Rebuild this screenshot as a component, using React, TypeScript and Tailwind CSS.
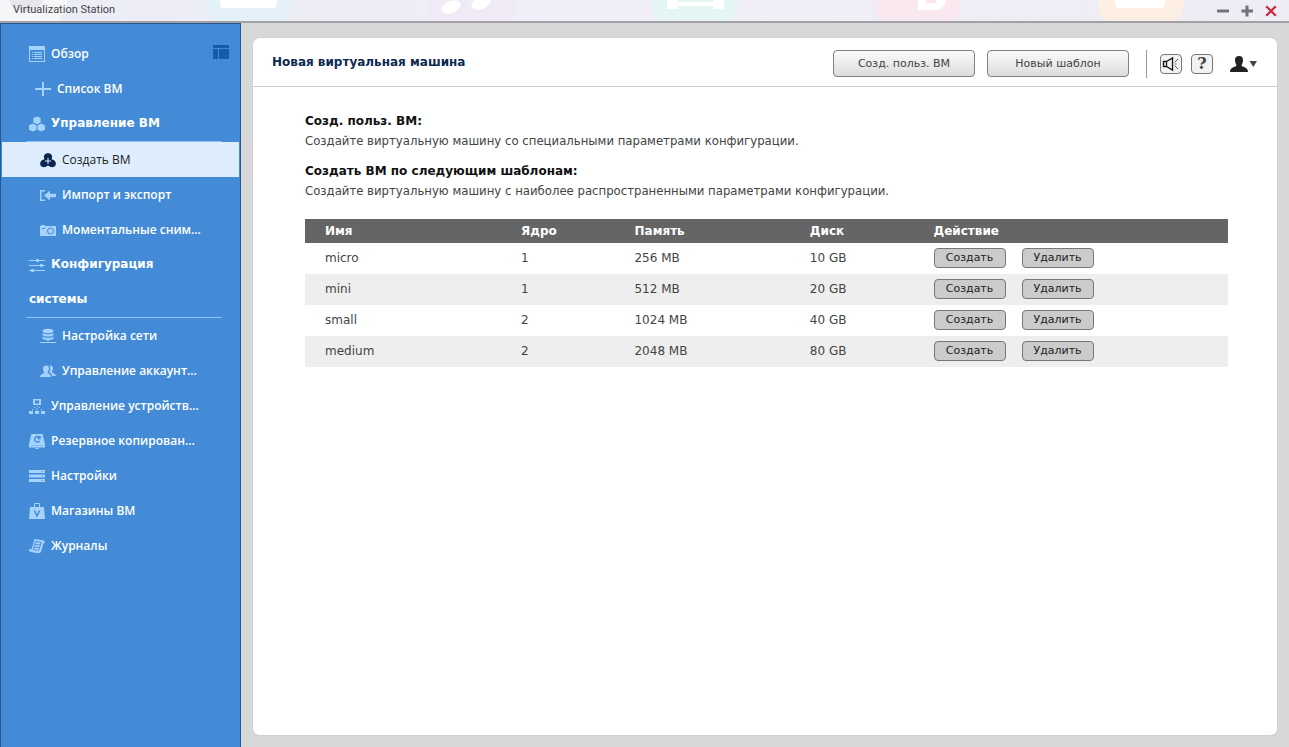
import type { ReactNode } from "react";

type IconProps = { children: ReactNode; className?: string };

function Glyph({ children, className = "" }: IconProps) {
  return (
    <svg viewBox="0 0 16 16" className={`h-4 w-4 shrink-0 ${className}`} fill="currentColor" aria-hidden="true">
      {children}
    </svg>
  );
}

const overviewIcon = (
  <Glyph>
    <path d="M0 0h16v16H0zM1 4v11h14V4z" fillRule="evenodd" />
    <path d="M3 6h1v1H3zM5 6h8v1H5zM3 8h1v1H3zM5 8h8v1H5zM3 10h1v1H3zM5 10h8v1H5zM3 12h1v1H3zM5 12h8v1H5z" />
  </Glyph>
);

const plusIcon = (
  <Glyph>
    <path d="M7 1h2v6h7v2H9v6H7V9H0V7h7z" />
  </Glyph>
);

const cubesIcon = (
  <Glyph>
    <path d="M8 0.500l3.600 1.600v4.500L8 8.200 4.400 6.600V2.100zM3.800 7.600l3.700 1.600v4.600l-3.700 1.700L0 13.800V9.200zM12.200 7.600L16 9.200v4.600l-3.800 1.700-3.700-1.700V9.200z" />
  </Glyph>
);

const createIcon = (
  <Glyph>
    <path d="M8 1l3 .9 1.200 2.400-.5 3L14.500 8.500 16 11l-.7 3-2.600 1.200-2.700-.5L8 13.500l-2 1.200-2.700.5L.7 14 0 11l1.500-2.500 2.800-1.200-.5-3L5 1.900z" />
    <path d="M7.500 6h1v2.500H11v1H8.500V12h-1V9.500H5v-1h2.500z" fill="#ddedfd" />
  </Glyph>
);

const importIcon = (
  <Glyph>
    <path d="M0 3h5v1.500H1.500v8H5V14H0zM4 8.500L10 3.500v3.200h6v3.600h-6v3.200z" />
  </Glyph>
);

const cameraIcon = (
  <Glyph>
    <path d="M0 4h1V3h4v1h11v10H0z" />
    <circle cx="10.500" cy="9" r="3" fill="none" stroke="#438bd7" />
    <path d="M2 6h3v1H2z" fill="#438bd7" />
  </Glyph>
);

const slidersIcon = (
  <Glyph>
    <path d="M0 3h16v1H0zM0 8h16v1H0zM0 13h16v1H0z" />
    <circle cx="8.500" cy="3.500" r="1.700" />
    <circle cx="12.500" cy="8.500" r="1.700" />
    <circle cx="3.500" cy="13.500" r="1.700" />
  </Glyph>
);

const networkIcon = (
  <Glyph>
    <ellipse cx="8" cy="3" rx="5.500" ry="2.300" />
    <path d="M2.500 5c1.500 1.700 9.500 1.700 11 0v2c-1.500 2-9.500 2-11 0zM2.500 8.500c1.500 1.700 9.500 1.700 11 0v2c-1.500 2-9.500 2-11 0zM7.500 12h1v1.500h-1zM0 14h16v1H0z" />
  </Glyph>
);

const usersIcon = (
  <Glyph>
    <path d="M6 2.500c2 0 3 1.200 3 3 0 1.500-.6 2.600-1.300 3.300v1.400c1.800.7 3.300 1.300 3.300 3.800H0c0-2.500 2-3 4-3.800V8.800C3.400 8 3 7 3 5.500c0-1.800 1-3 3-3z" />
    <path d="M9.500 2.500c2.300-.4 3.500.9 3.500 2.700 0 1.500-.5 2.300-1.100 3.100v1.200c2 .8 3.800 1.500 4.100 3.500h-3.800c-.5-2-1.700-2.800-3-3.400 1-1.600 1.500-4.600.3-7.100z" />
  </Glyph>
);

const devicesIcon = (
  <Glyph>
    <path d="M4 1h8v6H4zM6 2.500v3h4v-3z" fillRule="evenodd" />
    <path d="M0 13h4v3H0zM6 13h4v3H6zM12 13h4v3h-4zM7.500 8h1v1h-1zM7.500 10h1v1h-1zM5 9h1v1H5zM3 11h1v1H3zM10 9h1v1h-1zM12 11h1v1h-1zM7.500 12h1v1h-1z" />
  </Glyph>
);

const backupIcon = (
  <Glyph>
    <path d="M2.500 1h11L16 11v3.500H0V11z" />
    <path d="M10.300 4.200A2.800 2.800 0 1 0 10.600 8M11 3v2.500H8.500" fill="none" stroke="#438bd7" strokeWidth="1.400" />
    <path d="M2 12h12v1H2z" fill="#438bd7" opacity=".35" />
    <path d="M6.500 15h3v1h-3z" />
  </Glyph>
);

const settingsIcon = (
  <Glyph>
    <path d="M0 2h16v3H0zM0 6.500h16v3H0zM0 11h16v3H0z" />
    <path d="M13 3h1v1h-1zM13 7.500h1v1h-1zM13 12h1v1h-1z" fill="#438bd7" />
  </Glyph>
);

const storeIcon = (
  <Glyph>
    <path d="M1 4h14l1 12H0z" />
    <path d="M5.500 4V.5h5V4" fill="none" stroke="currentColor" />
    <path d="M5.500 7.500L8 13l2.500-5.500" fill="none" stroke="#438bd7" strokeWidth="1.500" />
  </Glyph>
);

const logsIcon = (
  <Glyph>
    <path d="M5.500 1l8.500 1.200c1.300.3 2 1.300 1.700 2.800l-1.200.2-2.300 7.800c-.4 1.500-1.500 2.300-3 2.200L2 14c-1.300-.3-2.200-1.500-2-3l2.500.3z" />
    <path d="M6.500 3.500l5.500.9M5.800 6.200l5.500.9M5 8.900l5.500.9M4.500 11.500l4 .8M6.800 3l-2.600 8.700M12.300 4l-2.700 8.500" fill="none" stroke="#438bd7" strokeWidth=".9" />
  </Glyph>
);

type Item = { label: string; icon: ReactNode; kind: "top" | "plus" | "sub" | "group"; active?: boolean };

const items: Item[] = [
  { label: "Обзор", icon: overviewIcon, kind: "top" },
  { label: "Список ВМ", icon: plusIcon, kind: "plus" },
  { label: "Управление ВМ", icon: cubesIcon, kind: "group" },
  { label: "Создать ВМ", icon: createIcon, kind: "sub", active: true },
  { label: "Импорт и экспорт", icon: importIcon, kind: "sub" },
  { label: "Моментальные сним...", icon: cameraIcon, kind: "sub" },
  { label: "Конфигурация системы", icon: slidersIcon, kind: "group" },
  { label: "Настройка сети", icon: networkIcon, kind: "sub" },
  { label: "Управление аккаунт...", icon: usersIcon, kind: "sub" },
  { label: "Управление устройств...", icon: devicesIcon, kind: "top" },
  { label: "Резервное копирован...", icon: backupIcon, kind: "top" },
  { label: "Настройки", icon: settingsIcon, kind: "top" },
  { label: "Магазины ВМ", icon: storeIcon, kind: "top" },
  { label: "Журналы", icon: logsIcon, kind: "top" },
];

const templates = [
  { name: "micro", cores: 1, memory: "256 MB", disk: "10 GB" },
  { name: "mini", cores: 1, memory: "512 MB", disk: "20 GB" },
  { name: "small", cores: 2, memory: "1024 MB", disk: "40 GB" },
  { name: "medium", cores: 2, memory: "2048 MB", disk: "80 GB" },
];

const indent = { top: "pl-7", plus: "pl-[34px]", sub: "pl-[39px]", group: "" };

function NavItem({ item }: { item: Item }) {
  if (item.kind === "group") {
    return (
      <li className="ml-[25px] mr-[18px] border-b border-[#8fc3f5] pl-[3px] pr-8">
        <a href="#" className="block font-['DejaVu_Sans',sans-serif] text-xs font-bold leading-[35px] text-white">
          <span className="mr-1.5 inline-block align-middle text-[#a5d2ff]">{item.icon}</span>
          {item.label}
        </a>
      </li>
    );
  }
  return (
    <li>
      <a
        href="#"
        aria-current={item.active ? "page" : undefined}
        className={`flex h-[35px] items-center gap-1.5 whitespace-nowrap ${
          item.active ? "mx-px bg-[#ddedfd] pl-[38px] text-[#222]" : `font-semibold text-white ${indent[item.kind]}`
        }`}
      >
        <span className={item.active ? "text-[#0a2550]" : "text-[#a5d2ff]"}>{item.icon}</span>
        {item.label}
      </a>
    </li>
  );
}

function Backdrop() {
  return (
    <svg className="absolute inset-0 h-full w-full" aria-hidden="true">
      <circle cx="30" cy="-5" r="38" fill="#f6f6f9" />
      <circle cx="26" cy="-6" r="18" fill="#e6e6ec" />
      <rect x="207" y="-60" width="83" height="83" rx="16" fill="#e4f1f9" />
      <rect x="220" y="-20" width="57" height="28" rx="4" fill="#fff" />
      <rect x="428" y="-60" width="88" height="83" rx="16" fill="#f0eaf6" />
      <ellipse cx="451" cy="7" rx="10" ry="6" fill="#fff" transform="rotate(-20 451 7)" />
      <ellipse cx="481" cy="3" rx="10" ry="6" fill="#fff" transform="rotate(-20 481 3)" />
      <rect x="652" y="-60" width="85" height="83" rx="16" fill="#e4f5f3" />
      <path d="M667 0h11v2h35V0h11v9h-11V6h-35v3h-11z" fill="#fff" />
      <rect x="875" y="-60" width="85" height="83" rx="16" fill="#fae8f1" />
      <path d="M918 0h8v3h10V0h10q-1 10-12 10h-16z" fill="#fff" />
      <rect x="1098" y="-60" width="85" height="83" rx="16" fill="#fdefe3" />
      <rect x="1115" y="-20" width="50" height="28" rx="4" fill="#fff" />
    </svg>
  );
}

const toolButton =
  "h-[27px] w-[142px] rounded border border-[#808080] bg-gradient-to-b from-[#fafafa] to-[#dcdcdc] pt-0.5";
const rowButton = "h-5 w-[72px] rounded border border-[#777] bg-[#cbcbcb]";

export default function App() {
  return (
    <div className="flex min-h-screen flex-col bg-[#d8d8d8] font-['DejaVu_Sans',sans-serif] text-xs text-[#444]">
      <header className="relative flex h-[23px] shrink-0 items-center justify-between overflow-hidden border-b-2 border-[#a0a0a6] bg-gradient-to-r from-[#ebedf5] via-[#f1eef8] to-[#eeedf5] pl-[13px] pr-3">
        <Backdrop />
        <h1 className="relative font-[Roboto,sans-serif] text-[11px] text-[#444]">Virtualization Station</h1>
        <div className="relative flex items-center gap-3">
          <button type="button" aria-label="Свернуть">
            <svg viewBox="0 0 12 12" className="h-3 w-3" fill="#73737b"><path d="M0 4.500h12v3H0z" /></svg>
          </button>
          <button type="button" aria-label="Развернуть">
            <svg viewBox="0 0 12 12" className="h-3 w-3" fill="#73737b"><path d="M4.500 0.500h3v4H12v3H7.500v4h-3v-4H.5v-3h4z" /></svg>
          </button>
          <button type="button" aria-label="Закрыть">
            <svg viewBox="0 0 12 12" className="h-3 w-3" stroke="#d0253c" strokeWidth="2.200"><path d="M1.200 1.200l9.600 9.600M10.800 1.200l-9.600 9.600" /></svg>
          </button>
        </div>
      </header>

      <div className="flex flex-1">
        <nav className="relative w-[241px] shrink-0 border-x border-t border-[#24588f] bg-[#438bd7] pt-3 font-['Open_Sans',sans-serif] text-xs">
          <button type="button" aria-label="Свернуть меню" className="absolute right-[11px] top-5">
            <svg viewBox="0 0 16 16" className="h-4 w-4" fill="#165ca8"><path d="M0 1h16v3H0zM0 5h5v10H0zM6 5h10v10H6z" /></svg>
          </button>
          <ul>
            {items.map((item) => (
              <NavItem key={item.label} item={item} />
            ))}
          </ul>
        </nav>

        <div className="flex flex-1 flex-col pb-3 pl-3 pr-3 pt-[15px]">
          <main className="flex-1 rounded-md bg-white shadow-[0_0_1px_#999]">
            <div className="flex h-[49px] items-center border-b border-[#c9c9c9] pl-[19px] pr-5">
              <h2 className="flex-1 font-bold text-[#0b2a50]">Новая виртуальная машина</h2>
              <div className="flex items-center pt-[3px]">
                <div className="flex gap-3 text-[11px] text-[#444]">
                  <button type="button" className={toolButton}>Созд. польз. ВМ</button>
                  <button type="button" className={toolButton}>Новый шаблон</button>
                </div>
                <div className="ml-[17px] flex h-7 items-center border-l border-[#999] pl-[13px]">
                  <button type="button" aria-label="Уведомления" className="flex h-5 w-[22px] items-center justify-center rounded border border-[#777] bg-[#f2f2f2]">
                    <svg viewBox="0 0 18 16" className="h-4 w-[18px]" fill="none" stroke="#111"><path d="M1.500 5.500h3v5h-3zM4.500 5.500l6-3.500v12l-6-3.500" strokeWidth="1.300" /><path d="M12.500 6.500L16 3M13 8h1.500M12.500 9.500L16 13" stroke="#555" /></svg>
                  </button>
                  <button type="button" aria-label="Справка" className="ml-[9px] h-5 w-[22px] rounded border border-[#777] bg-[#f2f2f2] font-['DejaVu_Serif',serif] text-base font-bold leading-none text-[#444]">?</button>
                  <button type="button" aria-label="Учётная запись" className="ml-4 flex items-center">
                    <svg viewBox="0 0 28 18" className="h-[18px] w-7" fill="#222"><path d="M10 1c2.700 0 4 1.500 4 4 0 2-.5 3.300-1.200 4.300v2c3 .9 6.200 1.700 6.200 5.700H1c0-4 3.200-4.800 6.200-5.700v-2C6.500 8.300 6 7 6 5c0-2.500 1.300-4 4-4z" /><path d="M20.500 6h7.500l-3.700 6z" fill="#444" /></svg>
                  </button>
                </div>
              </div>
            </div>

            <section className="pb-8 pl-[52px] pr-[49px] pt-6 leading-5">
              <h3 className="font-bold text-[#111]">Созд. польз. ВМ:</h3>
              <p className="font-['DejaVu_Sans_Condensed',sans-serif] text-[13px]">Создайте виртуальную машину со специальными параметрами конфигурации.</p>
              <h3 className="mt-2.5 font-bold text-[#111]">Создать ВМ по следующим шаблонам:</h3>
              <p className="font-['DejaVu_Sans_Condensed',sans-serif] text-[13px]">Создайте виртуальную машину с наиболее распространенными параметрами конфигурации.</p>
              <table className="mt-[18px] w-full table-fixed text-left">
                <colgroup>
                  <col className="w-[23.4%]" />
                  <col className="w-[12.3%]" />
                  <col className="w-[19%]" />
                  <col className="w-[13.4%]" />
                  <col />
                </colgroup>
                <thead className="bg-[#656565] text-white">
                  <tr className="h-6">
                    <th className="pl-5">Имя</th>
                    <th>Ядро</th>
                    <th>Память</th>
                    <th>Диск</th>
                    <th>Действие</th>
                  </tr>
                </thead>
                <tbody>
                  {templates.map((t) => (
                    <tr key={t.name} className="h-[31px] even:bg-[#eee]">
                      <td className="pb-0.5 pl-5">{t.name}</td>
                      <td className="pb-0.5">{t.cores}</td>
                      <td className="pb-0.5">{t.memory}</td>
                      <td className="pb-0.5">{t.disk}</td>
                      <td className="pb-0.5">
                        <div className="flex gap-4 text-[11px] leading-none text-[#222]">
                          <button type="button" className={rowButton}>Создать</button>
                          <button type="button" className={rowButton}>Удалить</button>
                        </div>
                      </td>
                    </tr>
                  ))}
                </tbody>
              </table>
            </section>
          </main>
        </div>
      </div>
    </div>
  );
}
